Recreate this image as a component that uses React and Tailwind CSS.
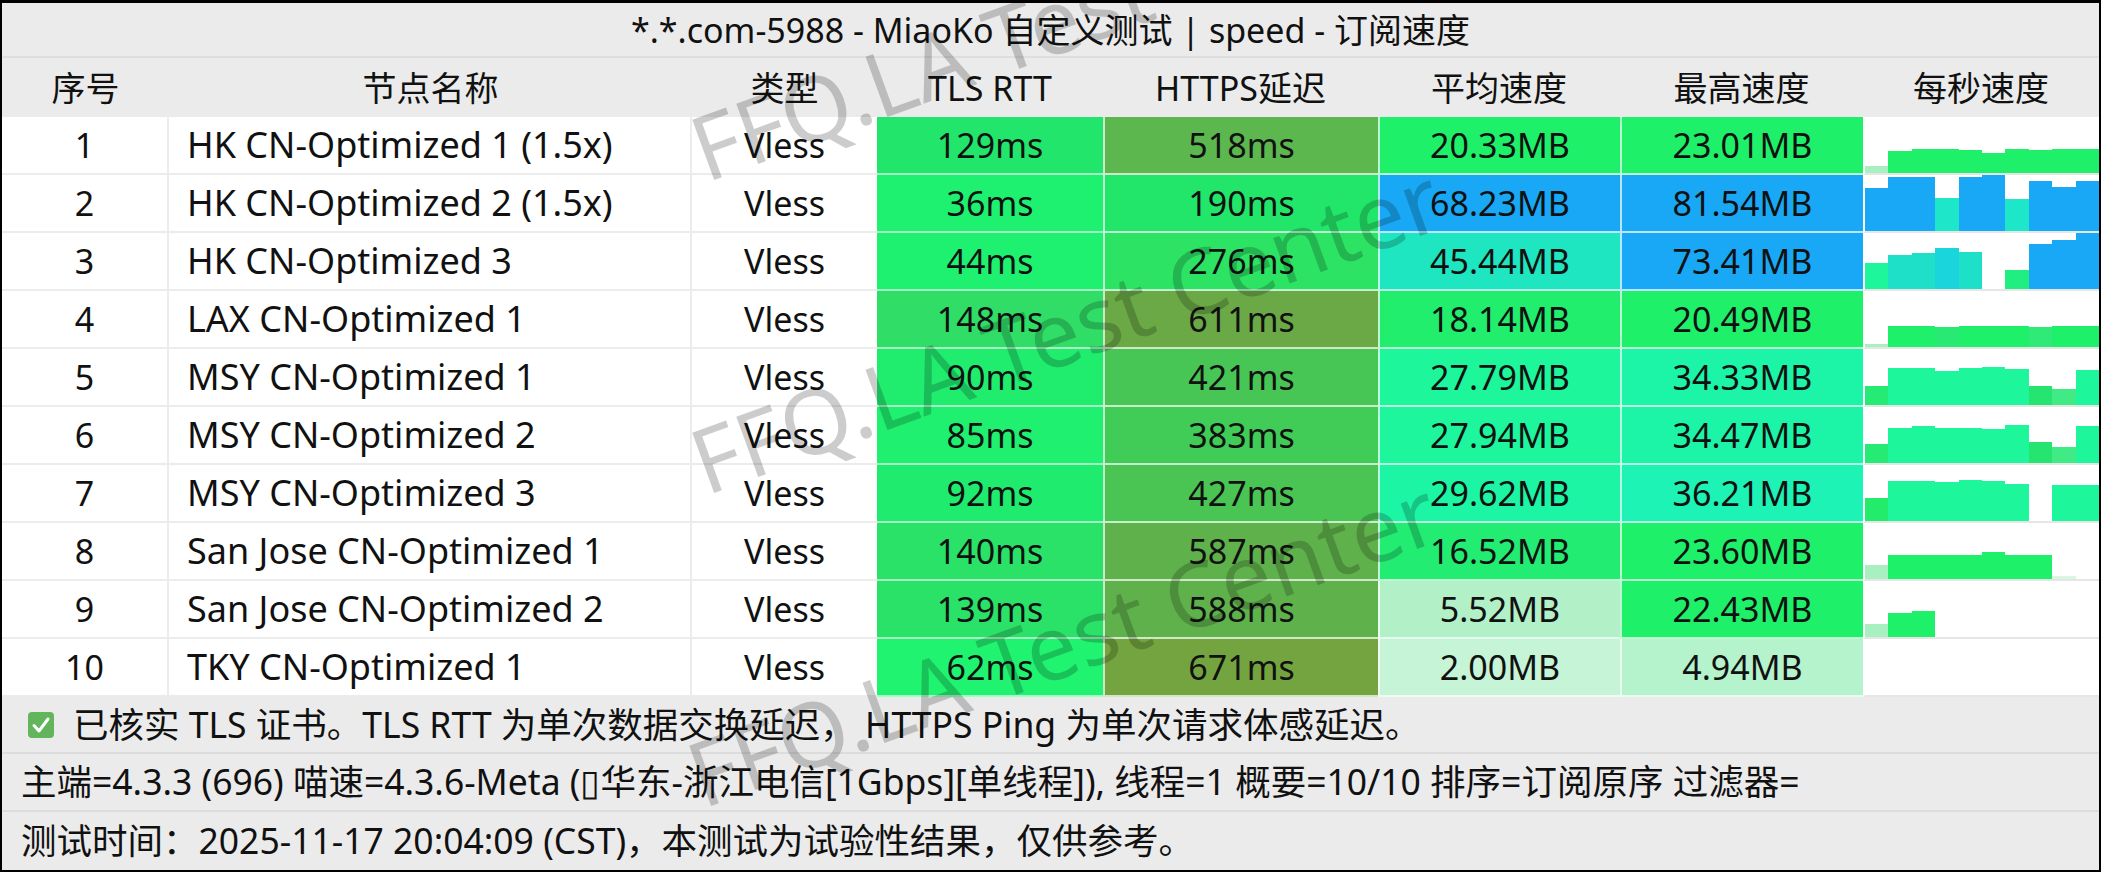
import React from "react";

const G = "#1ef06a";
const B = "#18a8f6";
const T = "#1ee6c8";
const T2 = "#1ee0c8";
const M = "#1df69a";
const P = "#a8f0c0";

const rows = [
  { n: 1, name: "HK CN-Optimized 1 (1.5x)", tls: "129ms", tlsC: "bg-[#22e66c]", https: "518ms", httpsC: "bg-[#5db74f]", avg: "20.33MB", avgC: "bg-[#1ef06a]", max: "23.01MB", maxC: "bg-[#1ef06a]",
    bars: [[7, P], [22, G], [24, G], [24, G], [23, G], [20, G], [24, G], [23, G], [24, G], [24, G]] },
  { n: 2, name: "HK CN-Optimized 2 (1.5x)", tls: "36ms", tlsC: "bg-[#1ef070]", https: "190ms", httpsC: "bg-[#22e66a]", avg: "68.23MB", avgC: "bg-[#18a8f6]", max: "81.54MB", maxC: "bg-[#18a8f6]",
    bars: [[43, B], [54, B], [54, B], [33, T], [54, B], [56, B], [32, T], [50, B], [44, B], [50, B]] },
  { n: 3, name: "HK CN-Optimized 3", tls: "44ms", tlsC: "bg-[#1ef070]", https: "276ms", httpsC: "bg-[#2ce364]", avg: "45.44MB", avgC: "bg-[#1ee6c0]", max: "73.41MB", maxC: "bg-[#18a8f6]",
    bars: [[26, M], [34, T2], [36, T2], [41, "#1ad6dc"], [37, T2], [0, G], [19, "#20ee80"], [45, B], [49, B], [56, B]] },
  { n: 4, name: "LAX CN-Optimized 1", tls: "148ms", tlsC: "bg-[#30de67]", https: "611ms", httpsC: "bg-[#6aa945]", avg: "18.14MB", avgC: "bg-[#20ee6c]", max: "20.49MB", maxC: "bg-[#1ef06a]",
    bars: [[3, P], [21, G], [21, G], [20, "#28ea72"], [21, G], [21, G], [21, G], [20, "#30ea78"], [21, G], [21, G]] },
  { n: 5, name: "MSY CN-Optimized 1", tls: "90ms", tlsC: "bg-[#20ec6e]", https: "421ms", httpsC: "bg-[#48c655]", avg: "27.79MB", avgC: "bg-[#1df69a]", max: "34.33MB", maxC: "bg-[#1cf5a8]",
    bars: [[19, "#25ea74"], [37, M], [37, M], [34, M], [37, M], [38, M], [36, M], [19, "#25e470"], [16, "#40ea84"], [35, M]] },
  { n: 6, name: "MSY CN-Optimized 2", tls: "85ms", tlsC: "bg-[#1ff06f]", https: "383ms", httpsC: "bg-[#40cc57]", avg: "27.94MB", avgC: "bg-[#1df69c]", max: "34.47MB", maxC: "bg-[#1cf5a8]",
    bars: [[19, "#25ea74"], [35, M], [37, M], [35, M], [35, M], [34, M], [38, M], [21, "#25e470"], [16, "#40ea84"], [37, M]] },
  { n: 7, name: "MSY CN-Optimized 3", tls: "92ms", tlsC: "bg-[#1fec6e]", https: "427ms", httpsC: "bg-[#4ac554]", avg: "29.62MB", avgC: "bg-[#1cf6a4]", max: "36.21MB", maxC: "bg-[#1cf3b4]",
    bars: [[23, "#22ec6a"], [40, M], [40, M], [39, M], [41, M], [40, M], [37, M], [0, M], [36, M], [36, M]] },
  { n: 8, name: "San Jose CN-Optimized 1", tls: "140ms", tlsC: "bg-[#2ae268]", https: "587ms", httpsC: "bg-[#5fb24b]", avg: "16.52MB", avgC: "bg-[#22ec72]", max: "23.60MB", maxC: "bg-[#1ef06a]",
    bars: [[14, P], [24, G], [24, G], [24, G], [24, G], [27, G], [24, G], [24, G], [3, "#d8f6e2"], [0, G]] },
  { n: 9, name: "San Jose CN-Optimized 2", tls: "139ms", tlsC: "bg-[#2ae268]", https: "588ms", httpsC: "bg-[#5fb24b]", avg: "5.52MB", avgC: "bg-[#b2f0c8]", max: "22.43MB", maxC: "bg-[#1ef06a]",
    bars: [[13, P], [24, G], [26, G], [0, G], [0, G], [0, G], [0, G], [0, G], [0, G], [0, G]] },
  { n: 10, name: "TKY CN-Optimized 1", tls: "62ms", tlsC: "bg-[#1ff370]", https: "671ms", httpsC: "bg-[#74a43f]", avg: "2.00MB", avgC: "bg-[#c6f4d6]", max: "4.94MB", maxC: "bg-[#b5f3cc]",
    bars: [] },
];

const cols = "grid grid-cols-[167px_523px_185px_226px_275px_242px_243px_236px]";

function Row({ r }) {
  return (
    <div className={`${cols} h-[58px]`}>
      <div className="flex items-center justify-center bg-white border-b-2 border-r-2 border-[#ececec]">{r.n}</div>
      <div className="flex items-center pl-[18px] bg-white border-b-2 border-r-2 border-[#ececec] text-[36px]">{r.name}</div>
      <div className="flex items-center justify-center bg-white border-b-2 border-[#ececec]">Vless</div>
      <div className={`flex items-center justify-center border-b-2 border-white/60 ${r.tlsC}`}>{r.tls}</div>
      <div className={`flex items-center justify-center border-b-2 border-l-2 border-white/70 ${r.httpsC}`}>{r.https}</div>
      <div className={`flex items-center justify-center border-b-2 border-l-2 border-white/70 ${r.avgC}`}>{r.avg}</div>
      <div className={`flex items-center justify-center border-b-2 border-l-2 border-white/70 ${r.maxC}`}>{r.max}</div>
      <div className="flex items-end bg-white border-b-2 border-l-2 border-[#e6e6e6] border-l-white overflow-hidden">
        {r.bars.map((b, i) => (
          <div key={i} className="flex-1" style={{ height: `${b[0]}px`, backgroundColor: b[1] }} />
        ))}
      </div>
    </div>
  );
}

function Watermark({ x, y }) {
  return (
    <div
      className="absolute whitespace-nowrap text-[90px] leading-none text-black/20 font-['Noto_Sans',sans-serif]"
      style={{ left: x, top: y, transform: "translate(-50%, -50%) rotate(-20deg)" }}
    >
      FFQ.LA Test Center
    </div>
  );
}

export default function App() {
  return (
    <div className="w-[2101px] h-[872px] bg-black pt-[3px] pl-[2px] pr-[2px] pb-[2px] overflow-hidden">
      <div className="relative w-full h-full bg-[#ebebeb] text-[#111] font-['Noto_Sans','Noto_Sans_CJK_SC',sans-serif] text-[34px] leading-none overflow-hidden">
        <div className="h-[55px] flex items-center justify-center border-b-2 border-[#dedede]">
          *.*.com-5988 - MiaoKo 自定义测试 | speed - 订阅速度
        </div>
        <div className={`${cols} h-[59px]`}>
          {["序号", "节点名称", "类型", "TLS RTT", "HTTPS延迟", "平均速度", "最高速度", "每秒速度"].map((h) => (
            <div key={h} className="flex items-center justify-center">{h}</div>
          ))}
        </div>
        {rows.map((r) => (
          <Row key={r.n} r={r} />
        ))}
        <div className="text-[35.5px]">
          <div className="h-[57px] flex items-center gap-[18px] pl-[25px] border-b-2 border-[#dcdcdc]">
            <svg width="28" height="28" viewBox="0 0 28 28" className="shrink-0">
              <rect x="1" y="1" width="26" height="26" rx="4" fill="#62b55a" />
              <path d="M7 14.5 L12 20 L21 8" stroke="#fff" strokeWidth="3" fill="none" strokeLinecap="round" strokeLinejoin="round" />
            </svg>
            <span>已核实 TLS 证书。TLS RTT 为单次数据交换延迟， HTTPS Ping 为单次请求体感延迟。</span>
          </div>
          <div className="h-[58px] flex items-center pl-[19px] border-b-2 border-[#dcdcdc] whitespace-nowrap">
            主端=4.3.3 (696) 喵速=4.3.6-Meta (▯华东-浙江电信[1Gbps][单线程]), 线程=1 概要=10/10 排序=订阅原序 过滤器=
          </div>
          <div className="h-[58px] flex items-center pl-[19px] whitespace-nowrap">
            测试时间：2025-11-17 20:04:09 (CST)，本测试为试验性结果，仅供参考。
          </div>
        </div>
        <div className="absolute inset-0 pointer-events-none">
          <Watermark x={1063} y={12} />
          <Watermark x={1063} y={325} />
          <Watermark x={1060} y={638} />
        </div>
      </div>
    </div>
  );
}
